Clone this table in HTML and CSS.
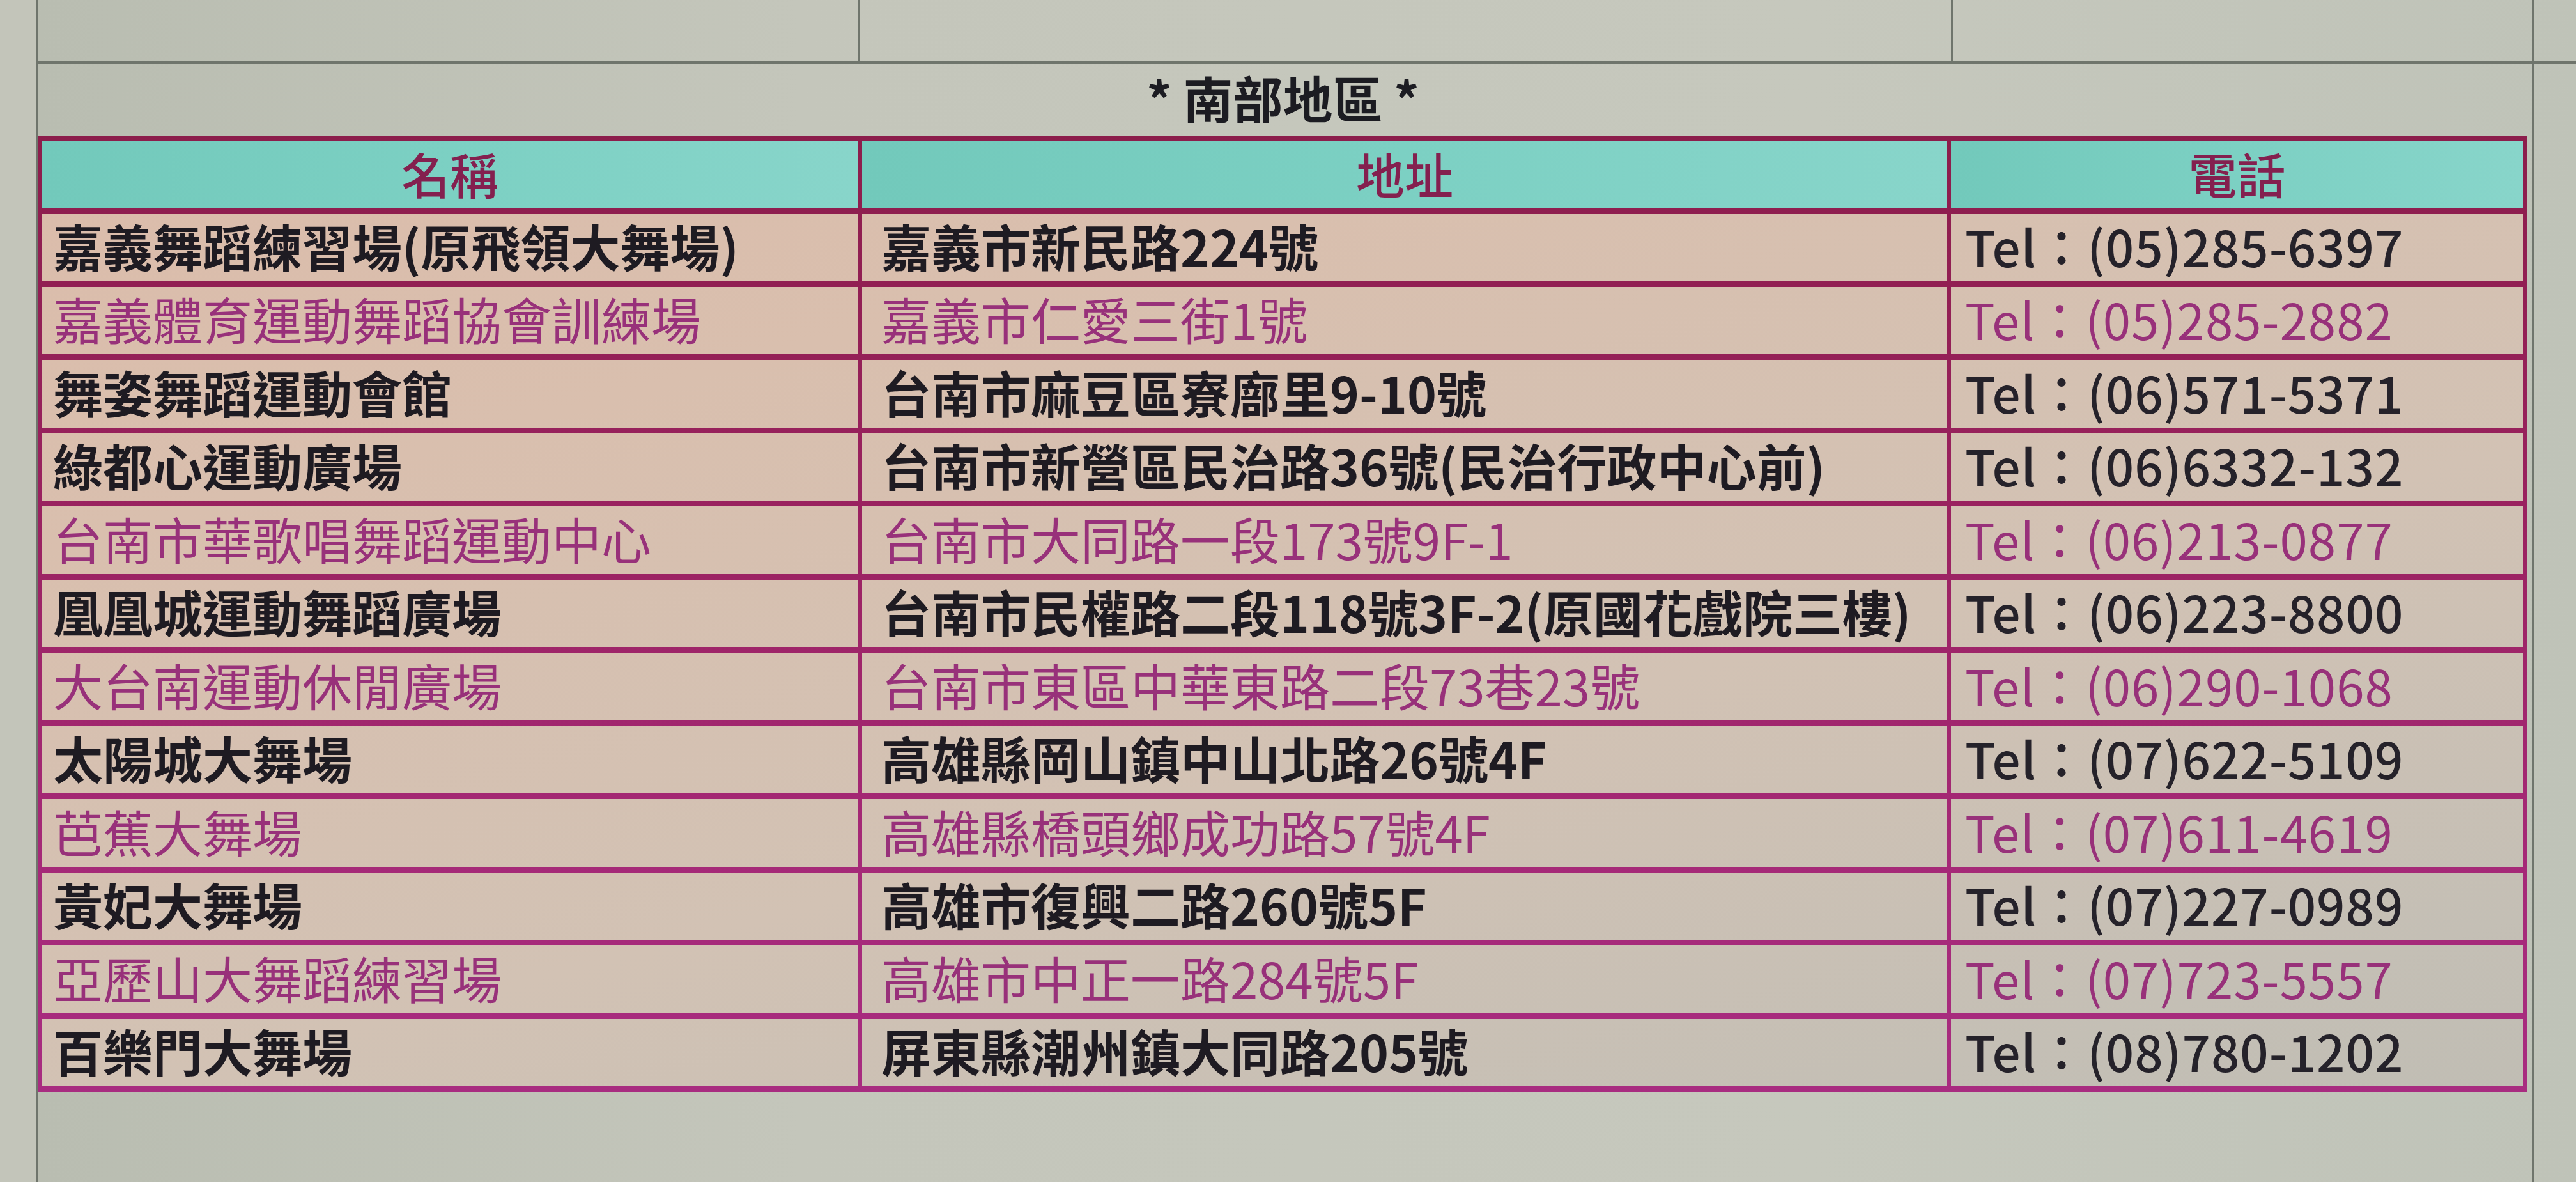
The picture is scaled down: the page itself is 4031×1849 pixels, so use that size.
FILE: index.html
```html
<!DOCTYPE html>
<html lang="zh-Hant">
<head>
<meta charset="utf-8">
<title>南部地區</title>
<link rel="stylesheet" href="styles.css">
</head>
<body>
<div class="sheet">
  <div class="toprow">
    <div class="gcell c1"></div>
    <div class="gcell c2"></div>
    <div class="gcell c3"></div>
    <div class="gcell c4"></div>
  </div>
  <div class="main">
    <div class="content">
      <div class="title">* 南部地區 *</div>
      <div class="table">
        <div class="th">名稱</div>
        <div class="th">地址</div>
        <div class="th">電話</div>

        <div class="td n dark">嘉義舞蹈練習場(原飛領大舞場)</div>
        <div class="td a dark">嘉義市新民路224號</div>
        <div class="td t dark">Tel：(05)285-6397</div>

        <div class="td n pink">嘉義體育運動舞蹈協會訓練場</div>
        <div class="td a pink">嘉義市仁愛三街1號</div>
        <div class="td t pink">Tel：(05)285-2882</div>

        <div class="td n dark">舞姿舞蹈運動會館</div>
        <div class="td a dark">台南市麻豆區寮廍里9-10號</div>
        <div class="td t dark">Tel：(06)571-5371</div>

        <div class="td n dark">綠都心運動廣場</div>
        <div class="td a dark">台南市新營區民治路36號(民治行政中心前)</div>
        <div class="td t dark">Tel：(06)6332-132</div>

        <div class="td n pink">台南市華歌唱舞蹈運動中心</div>
        <div class="td a pink">台南市大同路一段173號9F-1</div>
        <div class="td t pink">Tel：(06)213-0877</div>

        <div class="td n dark">凰凰城運動舞蹈廣場</div>
        <div class="td a dark">台南市民權路二段118號3F-2(原國花戲院三樓)</div>
        <div class="td t dark">Tel：(06)223-8800</div>

        <div class="td n pink">大台南運動休閒廣場</div>
        <div class="td a pink">台南市東區中華東路二段73巷23號</div>
        <div class="td t pink">Tel：(06)290-1068</div>

        <div class="td n dark">太陽城大舞場</div>
        <div class="td a dark">高雄縣岡山鎮中山北路26號4F</div>
        <div class="td t dark">Tel：(07)622-5109</div>

        <div class="td n pink">芭蕉大舞場</div>
        <div class="td a pink">高雄縣橋頭鄉成功路57號4F</div>
        <div class="td t pink">Tel：(07)611-4619</div>

        <div class="td n dark">黃妃大舞場</div>
        <div class="td a dark">高雄市復興二路260號5F</div>
        <div class="td t dark">Tel：(07)227-0989</div>

        <div class="td n pink">亞歷山大舞蹈練習場</div>
        <div class="td a pink">高雄市中正一路284號5F</div>
        <div class="td t pink">Tel：(07)723-5557</div>

        <div class="td n dark">百樂門大舞場</div>
        <div class="td a dark">屏東縣潮州鎮大同路205號</div>
        <div class="td t dark">Tel：(08)780-1202</div>
      </div>
    </div>
    <div class="rightcol"></div>
  </div>
</div>
</body>
</html>
```
FILE: styles.css
```css
html, body {
  margin: 0;
  padding: 0;
}
body {
  width: 4031px;
  height: 1849px;
  overflow: hidden;
  background: #c3c5ba;
  font-family: "Noto Sans CJK TC", "Noto Sans", sans-serif;
}
.sheet {
  margin-left: 56px;
  border-left: 3px solid #6f756c;
  height: 1849px;
  background: linear-gradient(90deg, #b9bdb1 0%, #c4c6bb 30%, #c6c8bd 70%, #bfc3b8 100%);
}
.toprow {
  display: grid;
  grid-template-columns: 1286px 1711px 909px 1fr;
  height: 96px;
  border-bottom: 4px solid #6f756c;
}
.gcell {
  border-right: 3px solid #6f756c;
}
.gcell.c4 {
  border-right: none;
}
.main {
  display: flex;
}
.content {
  width: 3897px;
}
.rightcol {
  flex: 1;
  border-left: 3px solid #6f756c;
  margin-left: 6px;
  height: 1749px;
}
.title {
  height: 112px;
  display: flex;
  align-items: center;
  justify-content: center;
  padding-bottom: 8px;
  box-sizing: border-box;
  font-size: 78px;
  font-weight: 700;
  color: #1c1c22;
  line-height: 1;
}
.table {
  display: grid;
  grid-template-columns: 1278px 1698px 895px;
  grid-template-rows: 104px repeat(12, 105.5px);
  column-gap: 6px;
  row-gap: 9px;
  padding: 9px 6px;
  width: 3895px;
  box-sizing: border-box;
  background: linear-gradient(180deg, #8c1d4b 0%, #9a2260 40%, #a52977 75%, #a82c80 100%);
}
.th {
  display: flex;
  align-items: center;
  justify-content: center;
  padding-bottom: 4px;
  font-size: 76px;
  font-weight: 500;
  color: #84204f;
  background: linear-gradient(90deg, #72c9bb 0%, #7cd0c3 50%, #88d5ca 100%);
  line-height: 1;
}
.td {
  display: flex;
  align-items: center;
  padding-bottom: 6px;
  font-size: 78px;
  line-height: 1;
  white-space: nowrap;
  background: linear-gradient(165deg, #dcbba9 0%, #d9bfae 30%, #d2c2b4 60%, #c4bfb5 85%, #bebcb3 100%) fixed;
}
.td.n {
  padding-left: 18px;
}
.td.a {
  padding-left: 30px;
}
.td.t {
  padding-left: 22px;
  letter-spacing: 1px;
}
.dark {
  color: #1e1b22;
  font-weight: 700;
}
.td.t.dark {
  color: #25222a;
  font-weight: 500;
}
.pink {
  color: #98317a;
  font-weight: 400;
}
```
